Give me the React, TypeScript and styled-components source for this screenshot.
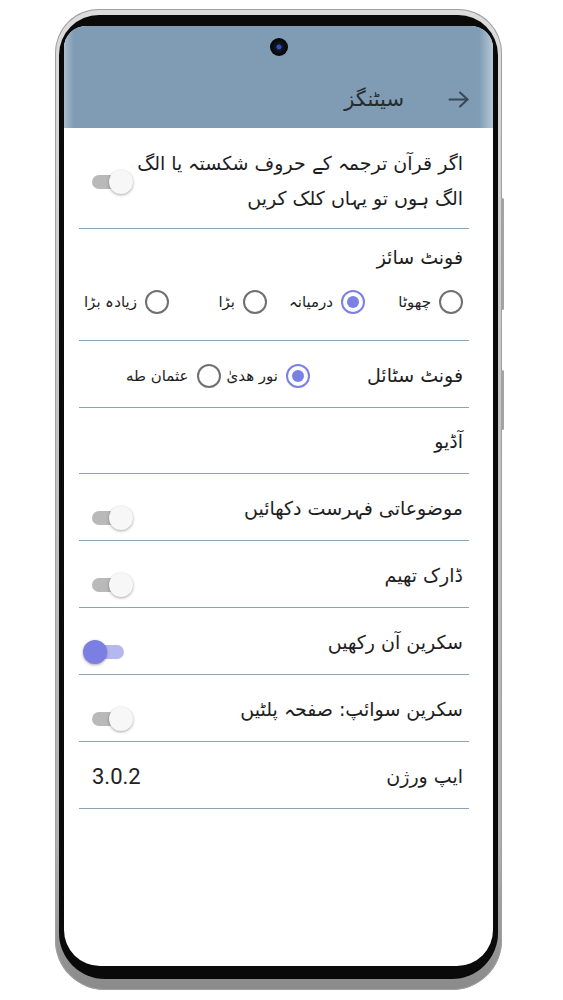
import React from 'react'
import styled, { createGlobalStyle } from 'styled-components'

const GlobalStyle = createGlobalStyle`
  html, body {
    margin: 0;
    padding: 0;
    background: #ffffff;
  }
  body {
    font-family: Roboto, "DejaVu Sans", sans-serif;
  }
`

const Stage = styled.div`
  padding: 9px 0 0 55px;
  height: 1000px;
  box-sizing: border-box;
`

const Frame = styled.div`
  position: relative;
  width: 447px;
  height: 981px;
  box-sizing: border-box;
  padding: 6px 4px 11px 4px;
  border-radius: 44px 44px 50px 50px;
  background: linear-gradient(180deg, #dcdcdc 0%, #c4c4c4 40%, #b0b0b0 85%, #8a8a8a 100%);
  box-shadow: inset 0 0 0 1px #a0a0a0;
`

const SideButton = styled.div<{ $top: number; $h: number }>`
  position: absolute;
  right: -2px;
  top: ${(p) => p.$top}px;
  width: 3px;
  height: ${(p) => p.$h}px;
  border-radius: 2px;
  background: #a3a3a3;
`

const Bezel = styled.div`
  height: 100%;
  box-sizing: border-box;
  padding: 11px 5px 13px 5px;
  border-radius: 40px 40px 46px 46px;
  background: #0a0a0a;
`

const Screen = styled.div`
  position: relative;
  height: 100%;
  overflow: hidden;
  border-radius: 22px 22px 36px 36px;
  background: #ffffff;
  display: flex;
  flex-direction: column;
`

const Camera = styled.div`
  position: absolute;
  left: 50%;
  top: 12px;
  width: 18px;
  height: 18px;
  margin-left: -9px;
  border-radius: 50%;
  background: radial-gradient(circle at 50% 50%, #2f4fb8 0 2px, #101828 3px, #050505 70%);
`

const Header = styled.div`
  direction: rtl;
  height: 102px;
  flex-shrink: 0;
  box-sizing: border-box;
  display: flex;
  align-items: center;
  gap: 44px;
  padding: 44px 24px 0 0;
  background: linear-gradient(90deg, #a9bccc 0, #7f9cb4 10px, #7f9cb4 calc(100% - 14px), #b7c7d4 100%);
`

const HeaderTitle = styled.h1`
  margin: 0;
  font-family: "DejaVu Sans", sans-serif;
  font-size: 21px;
  font-weight: 400;
  color: #262b30;
`

const List = styled.div`
  direction: rtl;
  margin: 0 24px 0 15px;
  display: flex;
  flex-direction: column;
`

const Row = styled.div<{ $h: number; $stack?: boolean; $top?: number }>`
  height: ${(p) => p.$h}px;
  box-sizing: border-box;
  display: flex;
  flex-direction: ${(p) => (p.$stack ? 'column' : 'row')};
  align-items: ${(p) => (p.$stack ? 'stretch' : 'center')};
  justify-content: ${(p) => (p.$stack ? 'flex-start' : 'space-between')};
  padding: ${(p) => p.$top ?? 0}px 6px 0 13px;
  border-bottom: 1.5px solid #8ca4b6;
`

const Label = styled.div`
  font-family: "DejaVu Sans", sans-serif;
  font-size: 19px;
  line-height: 35px;
  color: #1e1e1e;
  white-space: nowrap;
`

const Version = styled.div`
  font-family: Roboto, sans-serif;
  font-size: 22px;
  color: #222222;
  direction: ltr;
`

const SwitchBox = styled.div<{ $offset: number }>`
  position: relative;
  width: 50px;
  height: 24px;
  flex-shrink: 0;
  margin-top: ${(p) => p.$offset}px;
  margin-left: -9px;
`

const Track = styled.div<{ $on: boolean }>`
  position: absolute;
  left: 9px;
  right: 9px;
  top: 5px;
  height: 14px;
  border-radius: 7px;
  background: ${(p) => (p.$on ? '#b5b7ef' : '#b9b9b9')};
`

const Thumb = styled.div<{ $on: boolean }>`
  position: absolute;
  top: 0;
  ${(p) => (p.$on ? 'left: 0;' : 'right: 0;')}
  width: 24px;
  height: 24px;
  border-radius: 50%;
  background: ${(p) => (p.$on ? '#7b7fe2' : '#f7f7f7')};
  box-shadow: 0 1px 3px rgba(0, 0, 0, 0.35);
`

const RadioGrid = styled.div`
  display: grid;
  grid-template-columns: repeat(4, 98px);
  margin-top: 15px;
`

const Option = styled.label<{ $gap: number }>`
  display: flex;
  align-items: center;
  height: 24px;
  gap: ${(p) => p.$gap}px;
`

const Circle = styled.span<{ $checked: boolean }>`
  width: 24px;
  height: 24px;
  box-sizing: border-box;
  border-radius: 50%;
  border: 2.5px solid ${(p) => (p.$checked ? '#7b80e3' : '#707070')};
  display: flex;
  align-items: center;
  justify-content: center;
  flex-shrink: 0;
  &::after {
    content: '';
    width: 12px;
    height: 12px;
    border-radius: 50%;
    background: ${(p) => (p.$checked ? '#7b80e3' : 'transparent')};
  }
`

const OptionText = styled.span`
  font-family: "DejaVu Sans", sans-serif;
  font-size: 15px;
  color: #1e1e1e;
  white-space: nowrap;
`

const StyleRow = styled.div`
  display: flex;
  align-items: center;
  gap: 57px;
`

const StyleOptions = styled.div`
  display: flex;
  align-items: center;
  gap: 6px;
`

const Switch = ({ on, offset = 19 }: { on?: boolean; offset?: number }) => (
  <SwitchBox $offset={offset}>
    <Track $on={!!on} />
    <Thumb $on={!!on} />
  </SwitchBox>
)

const Radio = ({ label, checked }: { label: string; checked?: boolean }) => (
  <Option $gap={8}>
    <Circle $checked={!!checked} />
    <OptionText>{label}</OptionText>
  </Option>
)

const BackArrow = () => (
  <svg width="21" height="17" viewBox="0 0 21 17" fill="none" stroke="#3a4853" strokeWidth="2" strokeLinecap="round" strokeLinejoin="round">
    <path d="M1.5 8.5h18" />
    <path d="M12 1.5l7.5 7-7.5 7" />
  </svg>
)

const sizes = ['چھوٹا', 'درمیانہ', 'بڑا', 'زیادہ بڑا']

const toggles = [
  { label: 'موضوعاتی فہرست دکھائیں', on: false },
  { label: 'ڈارک تھیم', on: false },
  { label: 'سکرین آن رکھیں', on: true },
  { label: 'سکرین سوائپ: صفحہ پلٹیں', on: false },
]

export default function App() {
  return (
    <>
      <GlobalStyle />
      <Stage>
        <Frame>
          <SideButton $top={189} $h={112} />
          <SideButton $top={361} $h={60} />
          <Bezel>
            <Screen>
              <Camera />
              <Header>
                <BackArrow />
                <HeaderTitle>سیٹنگز</HeaderTitle>
              </Header>
              <List>
                <Row $h={101} $top={5}>
                  <Label>
                    اگر قرآن ترجمہ کے حروف شکستہ یا الگ
                    <br />
                    الگ ہوں تو یہاں کلک کریں
                  </Label>
                  <Switch offset={2} />
                </Row>
                <Row $h={112} $stack $top={11}>
                  <Label>فونٹ سائز</Label>
                  <RadioGrid>
                    {sizes.map((s, i) => (
                      <Radio key={s} label={s} checked={i === 1} />
                    ))}
                  </RadioGrid>
                </Row>
                <Row $h={67} $stack $top={17}>
                  <StyleRow>
                    <Label>فونٹ سٹائل</Label>
                    <StyleOptions>
                      <Radio label="نور ھدیٰ" checked />
                      <Radio label="عثمان طه" />
                    </StyleOptions>
                  </StyleRow>
                </Row>
                <Row $h={66} $top={2}>
                  <Label>آڈیو</Label>
                </Row>
                {toggles.map((t) => (
                  <Row key={t.label} $h={67} $top={2}>
                    <Label>{t.label}</Label>
                    <Switch on={t.on} />
                  </Row>
                ))}
                <Row $h={67} $top={2}>
                  <Label>ایپ ورژن</Label>
                  <Version>3.0.2</Version>
                </Row>
              </List>
            </Screen>
          </Bezel>
        </Frame>
      </Stage>
    </>
  )
}
